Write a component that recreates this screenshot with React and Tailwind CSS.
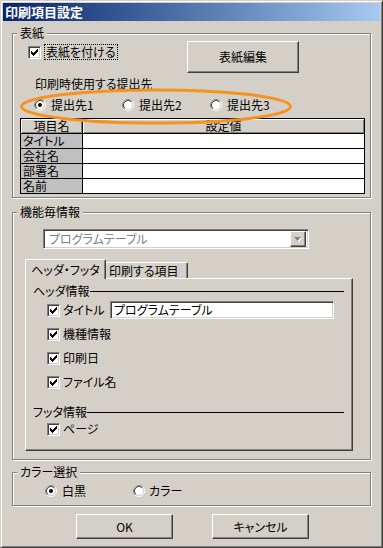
import React from 'react'

const Check = () => (
    <span className="w-[13px] h-[13px] shrink-0 flex items-center justify-center bg-white border border-t-[#808080] border-l-[#808080] border-r-white border-b-white shadow-[inset_1px_1px_0_#404040,inset_-1px_-1px_0_#d4d0c8]">
        <svg width="7" height="7" viewBox="0 0 7 7">
            <path d="M6 0h1v1h-1z M5 1h2v1h-2z M0 2h1v1h-1z M4 2h3v1h-3z M0 3h2v1h-2z M3 3h3v1h-3z M0 4h5v1h-5z M1 5h3v1h-3z M2 6h1v1h-1z" fill="#000" />
        </svg>
    </span>
)

const Radio = ({ on }) => (
    <svg width="12" height="12" viewBox="0 0 12 12" className="shrink-0">
        <circle cx="6" cy="6" r="5.5" fill="none" stroke="#fff" />
        <path d="M2.11 9.89A5.5 5.5 0 0 1 9.89 2.11" fill="none" stroke="#808080" />
        <circle cx="6" cy="6" r="4.5" fill="#fff" stroke="#d4d0c8" />
        <path d="M2.82 9.18A4.5 4.5 0 0 1 9.18 2.82" fill="none" stroke="#404040" />
        {on && <circle cx="6" cy="6" r="2" fill="#000" />}
    </svg>
)

const GroupBox = ({ title, className, children }) => (
    <fieldset className={`border border-[#808080] shadow-[inset_1px_1px_0_#fff,1px_1px_0_#fff] ${className}`}>
        <legend className="ml-[4px] px-[3px] leading-[14px] bg-[#d4d0c8]">{title}</legend>
        {children}
    </fieldset>
)

const raised = 'bg-[#d4d0c8] border border-t-white border-l-white border-r-[#404040] border-b-[#404040] shadow-[inset_-1px_-1px_0_#808080]'
const sunken = 'border border-t-[#808080] border-l-[#808080] border-r-white border-b-white shadow-[inset_1px_1px_0_#404040,inset_-1px_-1px_0_#d4d0c8]'

const rows = ['タイトル', '会社名', '部署名', '名前']

export default function App() {
    return (
        <div className="relative w-[383px] h-[548px] flex flex-col bg-[#d4d0c8] border border-t-[#d4d0c8] border-l-[#d4d0c8] border-r-[#404040] border-b-[#404040] shadow-[inset_1px_1px_0_#fff,inset_-1px_-1px_0_#808080] p-[2px] text-[12px] leading-[14px] text-black whitespace-nowrap [font-feature-settings:'palt'] font-['Noto_Sans_CJK_JP',sans-serif]">
            <div className="h-[18px] shrink-0 bg-gradient-to-r from-[#0a246a] to-[#a6caf0] pl-[2px] text-white font-bold text-[13px] leading-[18px]">印刷項目設定</div>

            <div className="flex flex-col px-[9px]">
                {/* cover */}
                <GroupBox title="表紙" className="mt-[5px] pb-[3px]">
                    <div className="flex items-start mt-[1px]">
                        <div className="ml-[15px] mt-[3px] flex items-center">
                            <Check />
                            <span className="ml-[3px] border border-dotted border-black px-[1px] leading-[14px]">表紙を付ける</span>
                        </div>
                        <button className={`ml-auto mr-[71px] w-[112px] h-[32px] ${raised}`}>表紙編集</button>
                    </div>
                    <div className="mt-[4px] ml-[22px]">印刷時使用する提出先</div>
                    <div className="mt-[7px] ml-[21px] flex h-[14px]">
                        {['提出先1', '提出先2', '提出先3'].map((t, i) => (
                            <div key={t} className="w-[88px] flex items-center gap-[5px]">
                                <Radio on={i === 0} />
                                <span>{t}</span>
                            </div>
                        ))}
                    </div>
                    <div className="mt-[6px] ml-[7px] w-[345px] grid grid-cols-[61px_281px] gap-px bg-black border border-black">
                        <div className="h-[14px] leading-[13px] bg-[#d4d0c8] shadow-[inset_1px_1px_0_#fff,inset_-1px_-1px_0_#808080] text-center">項目名</div>
                        <div className="h-[14px] leading-[13px] bg-[#d4d0c8] shadow-[inset_1px_1px_0_#fff,inset_-1px_-1px_0_#808080] text-center">設定値</div>
                        {rows.map((r) => (
                            <React.Fragment key={r}>
                                <div className="h-[14px] leading-[13px] bg-[#c0c0c0] pl-[2px]">{r}</div>
                                <div className="h-[14px] bg-white"></div>
                            </React.Fragment>
                        ))}
                    </div>
                </GroupBox>

                {/* per function */}
                <GroupBox title="機能毎情報" className="mt-[7px] pb-[8px]">
                    <div className={`mt-[10px] ml-[30px] w-[266px] h-[20px] flex items-center p-[2px] bg-white ${sunken}`}>
                        <span className="flex-1 pl-[3px] text-[#808080]">プログラムテーブル</span>
                        <span className={`w-[16px] h-[16px] flex items-center justify-center ${raised}`}>
                            <svg width="8" height="5" viewBox="0 0 8 5">
                                <path d="M1 1h7l-3.5 4z" fill="#fff" />
                                <path d="M0 0h7l-3.5 4z" fill="#808080" />
                            </svg>
                        </span>
                    </div>

                    <div className="mt-[10px] ml-[12px] flex items-end h-[19px]">
                        <div className="relative z-10 -mb-px h-[20px] w-[81px] flex items-center justify-center bg-[#d4d0c8] border-l border-t border-r border-l-white border-t-white border-r-[#404040] shadow-[inset_-1px_0_0_#808080] rounded-t-[2px]">ヘッダ・フッタ</div>
                        <div className="h-[16px] w-[82px] flex items-center pl-[3px] border-t border-r border-t-white border-r-[#404040] shadow-[inset_-1px_0_0_#808080] rounded-tr-[2px]">印刷する項目</div>
                    </div>
                    <div className="ml-[12px] w-[328px] h-[173px] flex flex-col border border-t-white border-l-white border-r-[#404040] border-b-[#404040] shadow-[inset_-1px_-1px_0_#808080]">
                        <div className="mt-[5px] ml-[7px] mr-[8px] flex items-center">
                            <span>ヘッダ情報</span>
                            <div className="flex-1 h-px bg-black"></div>
                        </div>
                        <div className="mt-[3px] ml-[21px] h-[18px] flex items-center">
                            <Check />
                            <span className="ml-[3px] w-[47px]">タイトル</span>
                            <div className={`w-[224px] h-[18px] bg-white pl-[3px] flex items-center ${sunken}`}>プログラムテーブル</div>
                        </div>
                        {['機種情報', '印刷日', 'ファイル名'].map((t) => (
                            <div key={t} className="mt-[6px] ml-[21px] h-[18px] flex items-center">
                                <Check />
                                <span className="ml-[3px]">{t}</span>
                            </div>
                        ))}
                        <div className="mt-[14px] ml-[7px] mr-[8px] flex items-center">
                            <span>フッタ情報</span>
                            <div className="flex-1 h-px bg-black"></div>
                        </div>
                        <div className="mt-[1px] ml-[21px] h-[18px] flex items-center">
                            <Check />
                            <span className="ml-[3px]">ページ</span>
                        </div>
                    </div>
                </GroupBox>

                {/* colour */}
                <GroupBox title="カラー選択" className="mt-[5px] pb-[7px]">
                    <div className="mt-[5px] ml-[32px] h-[14px] flex">
                        <div className="w-[88px] flex items-center gap-[5px]">
                            <Radio on />
                            <span>白黒</span>
                        </div>
                        <div className="w-[88px] flex items-center gap-[4px]">
                            <Radio />
                            <span>カラー</span>
                        </div>
                    </div>
                </GroupBox>

                <div className="mt-[8px] ml-[64px] flex">
                    <button className={`w-[97px] h-[25px] ${raised}`}>OK</button>
                    <button className={`ml-[39px] w-[97px] h-[25px] ${raised}`}>キャンセル</button>
                </div>
            </div>

            <svg className="absolute left-[17px] top-[86px] pointer-events-none" width="276" height="40" viewBox="0 0 276 40">
                <ellipse cx="138" cy="19.5" rx="134.5" ry="16.5" fill="none" stroke="#f6921e" strokeWidth="3" />
            </svg>
        </div>
    )
}
